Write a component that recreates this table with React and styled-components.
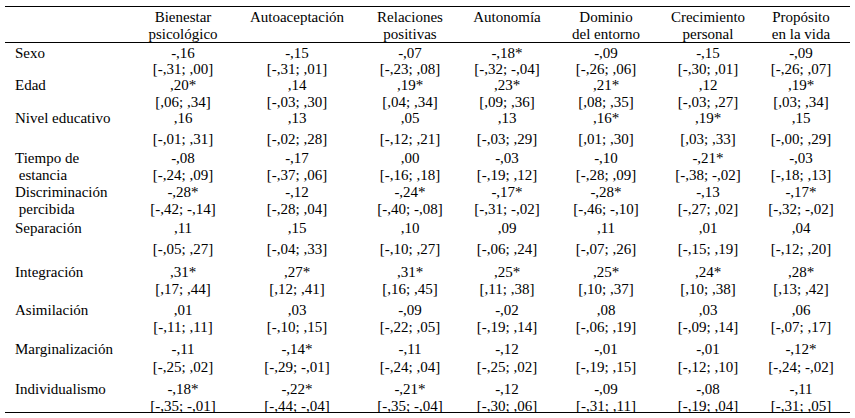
import React from "react";
import styled, { createGlobalStyle } from "styled-components";

const Global = createGlobalStyle`
  html, body { margin: 0; padding: 0; background: #fff; }
  body { font-family: "Liberation Serif", "Times New Roman", serif; color: #000; }
`;

const COLS = "125px 106px 122px 104px 90px 108px 96px 90px 4px";

const Page = styled.div`
  padding: 6px 5px 0 5px;
  width: 845px;
`;

const Table = styled.div`
  width: 845px;
  border-top: 1px solid #000;
  border-bottom: 1px solid #000;
  font-family: "Liberation Serif", "Times New Roman", serif;
  font-size: 15px;
  line-height: 16px;
  color: #000;
`;

const HeadRow = styled.div`
  display: grid;
  grid-template-columns: ${COLS};
  height: 35px;
  border-bottom: 1px solid #000;
  box-sizing: content-box;
`;

const Row = styled.div`
  display: grid;
  grid-template-columns: ${COLS};
  height: ${(p) => p.$h}px;
`;

const Cell = styled.div`
  display: flex;
  flex-direction: column;
  align-items: ${(p) => (p.$label ? "flex-start" : "center")};
  padding-top: 2px;
  padding-left: ${(p) => (p.$label ? 10 : 0)}px;
  white-space: pre;
`;

const Line = styled.span`
  display: block;
  margin-top: ${(p) => p.$gap || 0}px;
`;

const headers = [
  ["Bienestar", "psicológico"],
  ["Autoaceptación", ""],
  ["Relaciones", "positivas"],
  ["Autonomía", ""],
  ["Dominio", "del entorno"],
  ["Crecimiento", "personal"],
  ["Propósito", "en la vida"],
];

const rows = [
  { label: ["Sexo", ""], h: 32, g: 0, v: [["-,16", "[-,31; ,00]"], ["-,15", "[-,31; ,01]"], ["-,07", "[-,23; ,08]"], ["-,18*", "[-,32; -,04]"], ["-,09", "[-,26; ,06]"], ["-,15", "[-,30; ,01]"], ["-,09", "[-,26; ,07]"]] },
  { label: ["Edad", ""], h: 33, g: 1, v: [[",20*", "[,06; ,34]"], [",14", "[-,03; ,30]"], [",19*", "[,04; ,34]"], [",23*", "[,09; ,36]"], [",21*", "[,08; ,35]"], [",12", "[-,03; ,27]"], [",19*", "[,03; ,34]"]] },
  { label: ["Nivel educativo", ""], h: 40, g: 5, v: [[",16", "[-,01; ,31]"], [",13", "[-,02; ,28]"], [",05", "[-,12; ,21]"], [",13", "[-,03; ,29]"], [",16*", "[,01; ,30]"], [",19*", "[,03; ,33]"], [",15", "[-,00; ,29]"]] },
  { label: ["Tiempo de", " estancia"], h: 34, g: 1, v: [["-,08", "[-,24; ,09]"], ["-,17", "[-,37; ,06]"], [",00", "[-,16; ,18]"], ["-,03", "[-,19; ,12]"], ["-,10", "[-,28; ,09]"], ["-,21*", "[-,38; -,02]"], ["-,03", "[-,18; ,13]"]] },
  { label: ["Discriminación", " percibida"], h: 36, g: 1, v: [["-,28*", "[-,42; -,14]"], ["-,12", "[-,28; ,04]"], ["-,24*", "[-,40; -,08]"], ["-,17*", "[-,31; -,02]"], ["-,28*", "[-,46; -,10]"], ["-,13", "[-,27; ,02]"], ["-,17*", "[-,32; -,02]"]] },
  { label: ["Separación", ""], h: 44, g: 5, v: [[",11", "[-,05; ,27]"], [",15", "[-,04; ,33]"], [",10", "[-,10; ,27]"], [",09", "[-,06; ,24]"], [",11", "[-,07; ,26]"], [",01", "[-,15; ,19]"], [",04", "[-,12; ,20]"]] },
  { label: ["Integración", ""], h: 38, g: 1, v: [[",31*", "[,17; ,44]"], [",27*", "[,12; ,41]"], [",31*", "[,16; ,45]"], [",25*", "[,11; ,38]"], [",25*", "[,10; ,37]"], [",24*", "[,10; ,38]"], [",28*", "[,13; ,42]"]] },
  { label: ["Asimilación", ""], h: 39, g: 1, v: [[",01", "[-,11; ,11]"], [",03", "[-,10; ,15]"], ["-,09", "[-,22; ,05]"], ["-,02", "[-,19; ,14]"], [",08", "[-,06; ,19]"], [",03", "[-,09; ,14]"], [",06", "[-,07; ,17]"]] },
  { label: ["Marginalización", ""], h: 40, g: 2, v: [["-,11", "[-,25; ,02]"], ["-,14*", "[-,29; -,01]"], ["-,11", "[-,24; ,04]"], ["-,12", "[-,25; ,02]"], ["-,01", "[-,19; ,15]"], ["-,01", "[-,12; ,10]"], ["-,12*", "[-,24; -,02]"]] },
  { label: ["Individualismo", ""], h: 33, g: 1, v: [["-,18*", "[-,35; -,01]"], ["-,22*", "[-,44; -,04]"], ["-,21*", "[-,35; -,04]"], ["-,12", "[-,30; ,06]"], ["-,09", "[-,31; ,11]"], ["-,08", "[-,19; ,04]"], ["-,11", "[-,31; ,05]"]] },
];

export default function App() {
  return (
    <Page>
      <Global />
      <Table>
        <HeadRow>
          <Cell $label />
          {headers.map((h, i) => (
            <Cell key={i}>
              <Line>{h[0]}</Line>
              <Line $gap={1}>{h[1] || "\u00a0"}</Line>
            </Cell>
          ))}
          <Cell />
        </HeadRow>
        {rows.map((r, i) => (
          <Row key={i} $h={r.h}>
            <Cell $label>
              <Line>{r.label[0]}</Line>
              <Line $gap={r.g}>{r.label[1] || "\u00a0"}</Line>
            </Cell>
            {r.v.map((c, j) => (
              <Cell key={j}>
                <Line>{c[0]}</Line>
                <Line $gap={r.g}>{c[1]}</Line>
              </Cell>
            ))}
            <Cell />
          </Row>
        ))}
      </Table>
    </Page>
  );
}
